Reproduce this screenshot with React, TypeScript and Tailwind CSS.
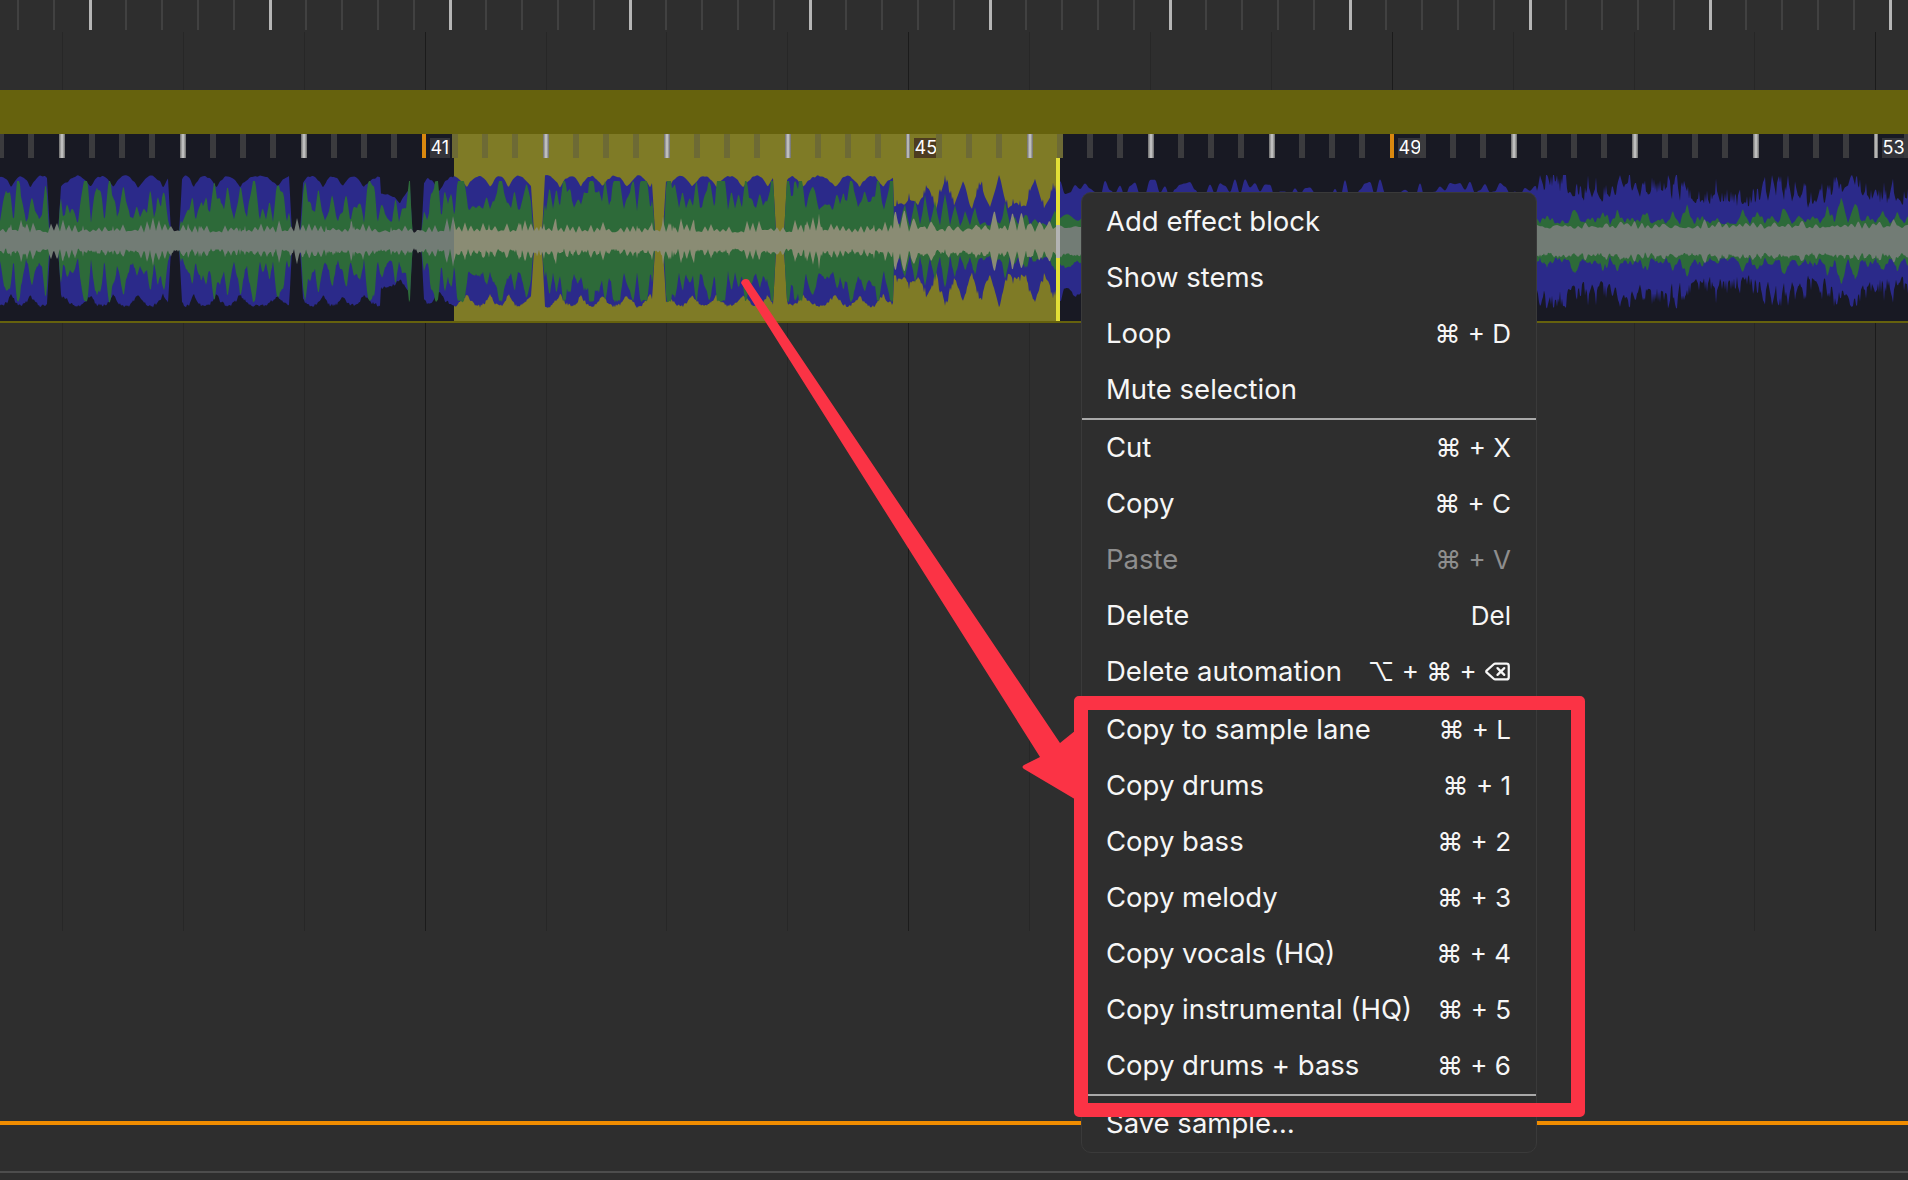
import { Delete } from "lucide-react";

// seeded noise so the waveform is the same on each load
let seed = 1337;
const rand = () => {
  seed = (seed * 16807) % 2147483647;
  return seed / 2147483647;
};
const table = Array.from({ length: 4096 }, () => rand());
const noise = (x: number, period: number, offset = 0) => {
  const p = x / period + offset * 97;
  const i = Math.floor(p);
  const f = p - i;
  const s = f * f * (3 - 2 * f);
  return table[i % 4096] * (1 - s) + table[(i + 1) % 4096] * s;
};
// sharp triangular peaks, for the green and grey spikes
const peaks = (x: number, period: number, offset = 0) => {
  const p = x / period + offset * 53;
  const i = Math.floor(p);
  const f = p - i;
  return table[(i * 7 + 11) % 4096] * (1 - Math.abs(2 * f - 1));
};

const clamp = (v: number, a: number, b: number) => Math.min(b, Math.max(a, v));

type Sample = { x: number; blue: number; green: number; gray: number; j: number };

const samples: Sample[] = [];
for (let x = 0; x <= 1908; x += 1) {
  const spike = rand();
  const n1 = noise(x, 11, 1);
  const n2 = noise(x, 5, 2);
  const n3 = noise(x, 2.5, 3);
  let blue = 0;
  let green = 0;
  let gray = 0;
  if (x < 894) {
    const beat = (((x - 54) % 121) + 121) % 121;
    const dist = Math.min(beat, 121 - beat);
    const gate = clamp((dist - 4) / 3, 0, 1);
    const sel = x > 454;
    const scallop = Math.abs(Math.sin(x / 7.5 + noise(x, 40, 6) * 3));
    blue = (66 - 11 * (1 - scallop) - 2 * n3) * gate + 9 * (1 - gate);
    const tall = peaks(x, 13, 1) + 0.6 * peaks(x, 7, 2);
    green = sel
      ? (30 + 34 * Math.min(1, tall * 1.3) + 2 * n3) * gate + 6 * (1 - gate)
      : (17 + 42 * Math.min(1, tall * 1.1) + 3 * n3) * gate + 6 * (1 - gate);
    gray = 8 + 3 * n2 + 12 * peaks(x, 6, 3) * (0.4 + noise(x, 25, 4)) + (spike > 0.96 ? 5 : 0);
    if (x > 380 && x < 454) blue -= 18 * n1;
  } else if (x < 1060) {
    const dip = peaks(x, 18, 4);
    blue = 30 + 32 * dip + 8 * n2 + (spike > 0.85 ? 6 : 0);
    green = 14 + 30 * peaks(x, 10, 5) * (0.5 + n1) + 4 * n3;
    gray = 9 + 24 * peaks(x, 9, 6) * noise(x, 30, 5) + 4 * n3;
  } else if (x < 1537) {
    blue = 42 + 20 * n2;
    green = 20 + 12 * n1;
    gray = 12 + 4 * n2;
  } else {
    const swell = noise(x, 37, 5);
    blue = 30 + 20 * swell + 22 * peaks(x, 8, 7) + 10 * n3 + (spike > 0.8 ? 10 : 0);
    green = 16 + 22 * peaks(x, 14, 8) * (0.5 + swell) + 6 * peaks(x, 5, 9) + 2 * n3;
    gray = 11 + 4 * n2 + 10 * peaks(x, 7, 10) * n1 + 2 * n3;
  }
  samples.push({ x, blue: Math.min(blue, 66), green: Math.min(green, 60), gray, j: rand() * 3 - 1.5 });
}

const MID = 83;
const area = (from: number, to: number, key: "blue" | "green" | "gray") => {
  const pts = samples.filter((s) => s.x >= from && s.x <= to);
  const top = pts.map((s) => `${s.x},${(MID - s[key]).toFixed(1)}`);
  const bottom = [...pts].reverse().map((s) => `${s.x},${(MID + s[key] + s.j).toFixed(1)}`);
  return `M${top.join("L")}L${bottom.join("L")}Z`;
};

const Waveform = () => (
  <svg width="1908" height="163" className="relative block shrink-0">
    <path d={area(0, 1908, "blue")} fill="#2b2a8a" />
    <path d={area(0, 1908, "green")} fill="#2d6a39" />
    <path d={area(0, 454, "gray")} fill="#727c75" />
    <path d={area(454, 1060, "gray")} fill="#8a8c74" />
    <path d={area(1060, 1908, "gray")} fill="#727c75" />
  </svg>
);

const GridLane = ({ height }: { height: string }) => (
  <div className={`flex pl-[62px] ${height}`}>
    {Array.from({ length: 16 }, (_, k) => (
      <div
        key={k}
        className={`w-[120.9px] shrink-0 border-l ${k % 4 === 3 ? "border-[#1b1b1b]" : "border-[#272727]"}`}
      />
    ))}
  </div>
);

const TopRuler = () => (
  <div className="flex h-[30px] pl-[17px]">
    {Array.from({ length: 53 }, (_, k) => (
      <div key={k} className="w-[36px] shrink-0">
        <div className={k % 5 === 2 ? "h-full w-[3px] bg-[#b5b5b5]" : "h-full w-[2px] bg-[#414141]"} />
      </div>
    ))}
  </div>
);

const majorTick = "bg-linear-to-r from-[#6c6c6c] via-[#cfcfcf] to-[#6c6c6c]";

const labels: Record<number, { text: string; bg: string; tick: string }> = {
  14: { text: "41", bg: "bg-[#34343a]", tick: "bg-[#d9880f]" },
  30: { text: "45", bg: "bg-[#4d3c20]", tick: majorTick },
  46: { text: "49", bg: "bg-[#34343a]", tick: "bg-[#d9880f]" },
  62: { text: "53", bg: "bg-[#34343a]", tick: majorTick },
};

const TrackRuler = () => (
  <div className="relative flex h-[24px] shrink-0 -ml-[2px]">
    {Array.from({ length: 64 }, (_, k) => {
      const x = 1 + 30.25 * k;
      const selected = x > 454 && x < 1062;
      const label = labels[k];
      const major = k % 4 === 2;
      let tick = selected ? "bg-[#6d6a35]" : "bg-[#3b3b3e]";
      if (major) tick = majorTick;
      if (label) tick = label.tick;
      return (
        <div key={k} className="flex w-[30.25px] shrink-0">
          <div className={`h-full shrink-0 ${label ? "w-[4px]" : "w-[6px]"} ${tick}`} />
          {label && (
            <span
              className={`ml-[4px] mt-[4px] h-[20px] px-px shrink-0 text-[18px] leading-[20px] text-white font-['Inter',sans-serif] ${label.bg}`}
            >
              {label.text}
            </span>
          )}
        </div>
      );
    })}
  </div>
);

const Track = () => (
  <div className="relative flex h-[189px] flex-col border-b-2 border-[#66620d] bg-[#181923]">
    <div className="absolute inset-y-0 left-[454px] w-[606px] bg-[#7f7b26]" />
    <TrackRuler />
    <Waveform />
    <div className="absolute left-[1056px] top-[24px] bottom-0 w-[4px] bg-[#e3df36]" />
    <div className="absolute left-[1056px] top-[91px] h-[33px] w-[4px] bg-[#b3b3b3]" />
  </div>
);

type Item = { label: string; keys?: string; dim?: boolean; icon?: boolean };

const groups: Item[][] = [
  [
    { label: "Add effect block" },
    { label: "Show stems" },
    { label: "Loop", keys: "⌘ + D" },
    { label: "Mute selection" },
  ],
  [
    { label: "Cut", keys: "⌘ + X" },
    { label: "Copy", keys: "⌘ + C" },
    { label: "Paste", keys: "⌘ + V", dim: true },
    { label: "Delete", keys: "Del" },
    { label: "Delete automation", keys: "⌥ + ⌘ + ", icon: true },
  ],
  [
    { label: "Copy to sample lane", keys: "⌘ + L" },
    { label: "Copy drums", keys: "⌘ + 1" },
    { label: "Copy bass", keys: "⌘ + 2" },
    { label: "Copy melody", keys: "⌘ + 3" },
    { label: "Copy vocals (HQ)", keys: "⌘ + 4" },
    { label: "Copy instrumental (HQ)", keys: "⌘ + 5" },
    { label: "Copy drums + bass", keys: "⌘ + 6" },
  ],
  [{ label: "Save sample…" }],
];

const ContextMenu = () => (
  <div className="absolute left-[1081px] top-[192px] w-[456px] rounded-[10px] border border-[#3a3a3a] bg-[#2e2e2e] pt-px text-[27.5px] text-[#f6f6f6] font-['Inter','DejaVu_Sans',sans-serif]">
    {groups.map((group, g) => (
      <div key={g} className={g < groups.length - 1 ? "border-b-2 border-[#a9a9a9]" : ""}>
        {group.map((item) => (
          <div
            key={item.label}
            className={`flex h-[56px] items-center justify-between pl-[24px] pr-[25px] ${item.dim ? "text-[#8e8e8e]" : ""}`}
          >
            <span>{item.label}</span>
            {item.keys && (
              <span className="-mt-[2px] flex items-center whitespace-pre text-[26px]">
                {item.keys}
                {item.icon && <Delete size={27} strokeWidth={2} />}
              </span>
            )}
          </div>
        ))}
      </div>
    ))}
  </div>
);

const Arrow = () => (
  <svg width="1908" height="1180" className="absolute inset-0">
    <path
      d="M741 283 Q742 279 746 279 Q749 279 750 282 L1060 743 L1086 722 L1086 806 L1073 798 L1024 769 Q1021 767 1024 765 L1040 757 Z"
      fill="#fb3345"
    />
  </svg>
);

export default function App() {
  return (
    <div className="relative h-[1180px] w-[1908px] overflow-hidden bg-[#2e2e2e]">
      <TopRuler />
      <div className="h-[2px]" />
      <GridLane height="h-[58px]" />
      <div className="h-[44px] bg-[#66620d]" />
      <Track />
      <GridLane height="h-[608px]" />
      <div className="mt-[190px] h-[4px] bg-[#f08c00]" />
      <div className="mt-[46px] h-[2px] bg-[#4d4d4d]" />
      <ContextMenu />
      <Arrow />
      <div className="absolute left-[1074px] top-[696px] h-[421px] w-[511px] rounded-[5px] border-[14px] border-[#fb3345]" />
    </div>
  );
}
